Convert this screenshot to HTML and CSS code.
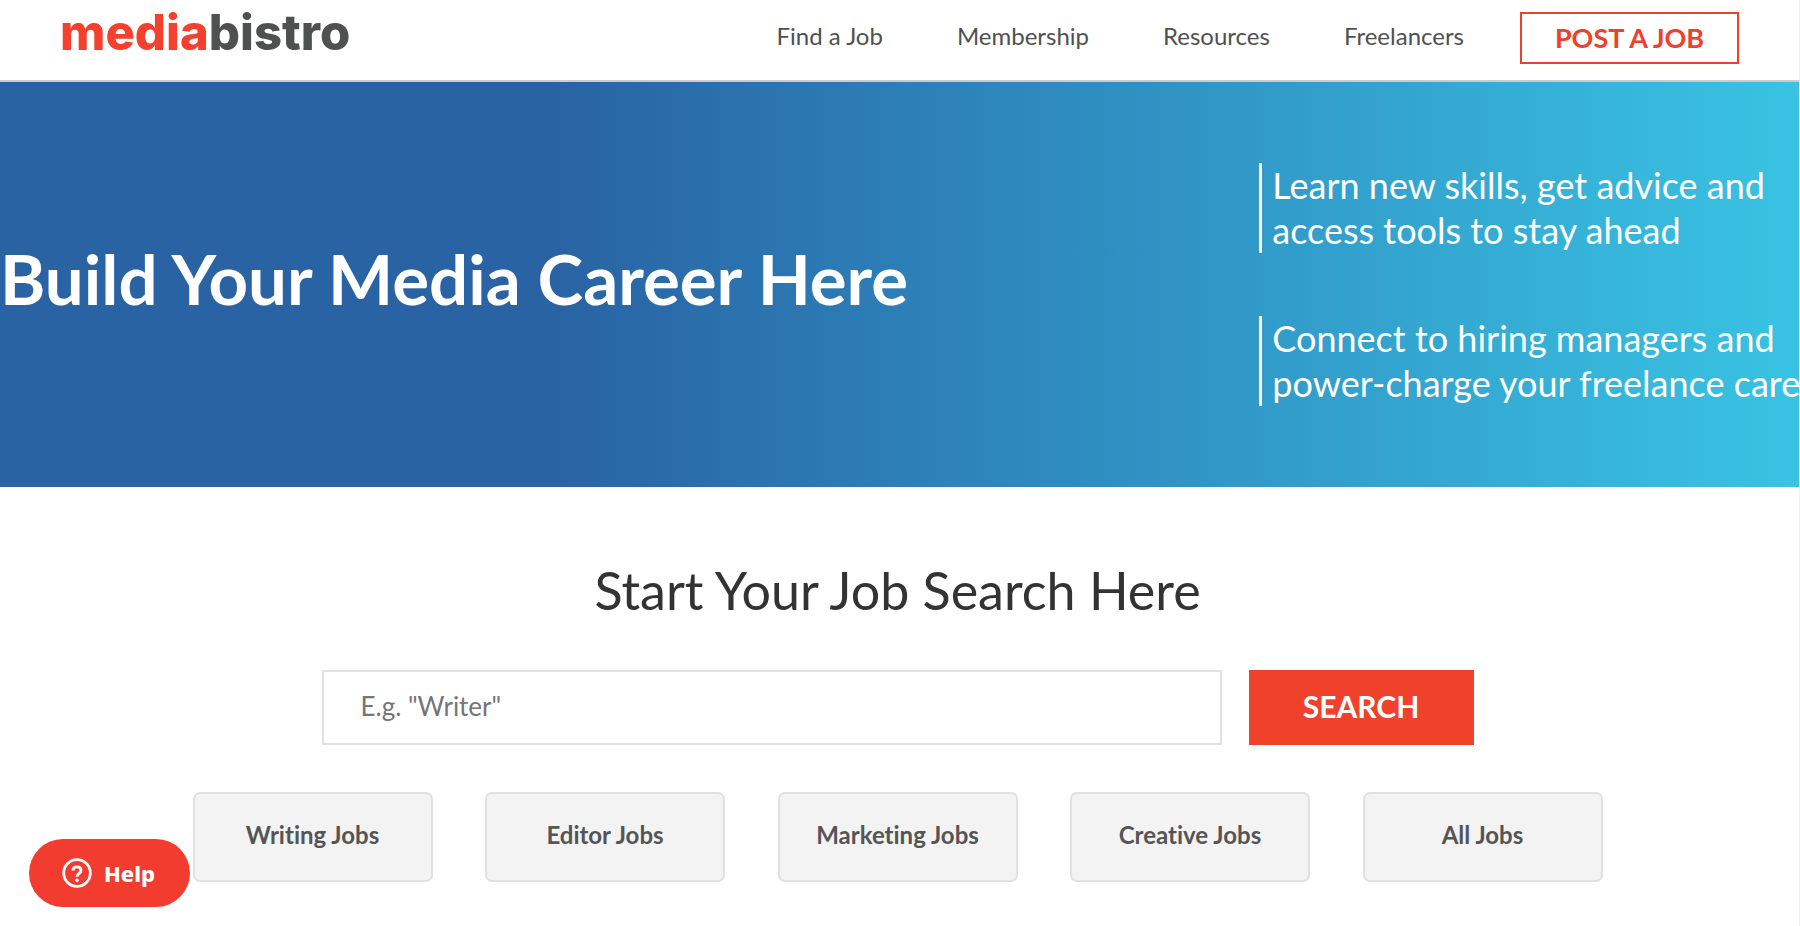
FILE: index.html
```html
<!DOCTYPE html>
<html lang="en">
<head>
<meta charset="utf-8">
<title>Mediabistro</title>
<link rel="stylesheet" href="styles.css">
</head>
<body>
<header class="site-header">
  <a class="logo" href="#"><span class="logo-accent">media</span>bistro</a>
  <nav class="main-nav">
    <a href="#">Find a Job</a>
    <a href="#">Membership</a>
    <a href="#">Resources</a>
    <a href="#">Freelancers</a>
  </nav>
  <a class="post-job" href="#">POST A JOB</a>
</header>
<main>
  <section class="hero">
    <h1 class="hero-title">Build Your Media Career Here</h1>
    <div class="hero-points">
      <p class="hero-point">Learn new skills, get advice and<br>access tools to stay ahead</p>
      <p class="hero-point">Connect to hiring managers and<br>power-charge your freelance career</p>
    </div>
  </section>
  <section class="job-search">
    <h2 class="search-title">Start Your Job Search Here</h2>
    <form class="search-form">
      <input class="search-input" type="text" aria-label="Job search" placeholder="E.g. &quot;Writer&quot;">
      <button class="search-button" type="submit">SEARCH</button>
    </form>
    <div class="categories">
      <a class="category" href="#">Writing Jobs</a>
      <a class="category" href="#">Editor Jobs</a>
      <a class="category" href="#">Marketing Jobs</a>
      <a class="category" href="#">Creative Jobs</a>
      <a class="category" href="#">All Jobs</a>
    </div>
  </section>
</main>
<button class="help" type="button">
  <svg class="help-icon" viewBox="0 0 30 30" fill="none" stroke="#fff" stroke-width="3" aria-hidden="true">
    <circle cx="15" cy="15" r="13.3" stroke-width="2.8"/>
    <path d="M11 12.6C11 10.2 12.7 8.9 15 8.9s4 1.4 4 3.6c0 2.8-4 3.2-4 6.3" stroke-width="2.9"/>
    <circle cx="15" cy="22.2" r="1.8" fill="#fff" stroke="none"/>
  </svg>
  <span>Help</span>
</button>
</body>
</html>
```
FILE: styles.css
```css
* {
  box-sizing: border-box;
}

html {
  min-height: 100%;
  overflow-x: hidden;
  background: #fff;
}

body {
  margin: 0;
  min-height: 100vh;
  border-right: 1px solid #f0f0f0;
  color: #4f5150;
  font-family: Lato, "Open Sans", sans-serif;
  font-variant-ligatures: none;
  overflow: hidden;
}

a {
  color: inherit;
  text-decoration: none;
}

.site-header {
  display: flex;
  align-items: center;
  height: 82px;
  padding: 0 60px 4px;
  border-bottom: 2px solid #ccc;
}

.logo {
  margin-right: auto;
  padding-bottom: 10px;
  color: #4f5150;
  font: 800 49px/60px Inter, sans-serif;
}

.logo-accent {
  color: #f4402c;
}

.main-nav {
  display: flex;
  gap: 74px;
  padding-bottom: 4px;
  font-size: 24px;
  line-height: 32px;
}

.post-job {
  width: 219px;
  margin-left: 56px;
  border: 2px solid #ef402b;
  color: #ef402b;
  font-size: 27px;
  font-weight: 700;
  line-height: 48px;
  text-align: center;
}

.hero {
  display: flex;
  justify-content: space-between;
  align-items: center;
  height: 405px;
  background: linear-gradient(90deg, #2963a3 31%, #2d83ba 53%, #39c3e3 100%);
  color: #fff;
}

.hero-title {
  margin: 0;
  padding-bottom: 12px;
  font-size: 69px;
  line-height: 80px;
  white-space: nowrap;
}

.hero-points {
  display: flex;
  flex-direction: column;
  gap: 63px;
  width: 30%;
}

.hero-point {
  margin: 0;
  padding-left: 10px;
  border-left: 3px solid #fff;
  font-size: 36px;
  line-height: 45px;
  white-space: nowrap;
}

.job-search {
  padding: 71px 4px 44px 0;
}

.search-title {
  margin: 0 0 48px;
  color: #333;
  font-size: 52px;
  font-weight: 400;
  line-height: 64px;
  text-align: center;
}

.search-form {
  display: flex;
  gap: 27px;
  width: 90%;
  max-width: 1152px;
  margin: 0 auto 47px;
}

.search-input {
  flex: 1;
  height: 75px;
  padding: 0 37px 4px;
  border: 2px solid #e1e1e1;
  color: #333;
  font: 26px Lato, sans-serif;
}

.search-input::placeholder {
  color: #757575;
}

.search-button {
  width: 225px;
  padding-bottom: 4px;
  border: 0;
  background: #f0412a;
  color: #fff;
  font: 700 30px Lato, sans-serif;
}

.categories {
  display: flex;
  justify-content: space-between;
  max-width: 1410px;
  margin: 0 auto;
}

.category {
  width: 240px;
  padding: 27px 0 31px;
  border: 2px solid #e1e1e1;
  border-radius: 7px;
  background: #f3f3f3;
  color: #555;
  font-size: 24px;
  font-weight: 700;
  line-height: 28px;
  text-align: center;
}

.help {
  position: fixed;
  bottom: 19px;
  left: 29px;
  display: flex;
  align-items: center;
  gap: 12px;
  min-width: 161px;
  height: 68px;
  padding: 0 33px;
  border: 0;
  border-radius: 34px;
  background: #f13c2f;
  color: #fff;
  font: 800 22px "Noto Sans", sans-serif;
}

.help-icon {
  width: 30px;
  height: 30px;
}
```
